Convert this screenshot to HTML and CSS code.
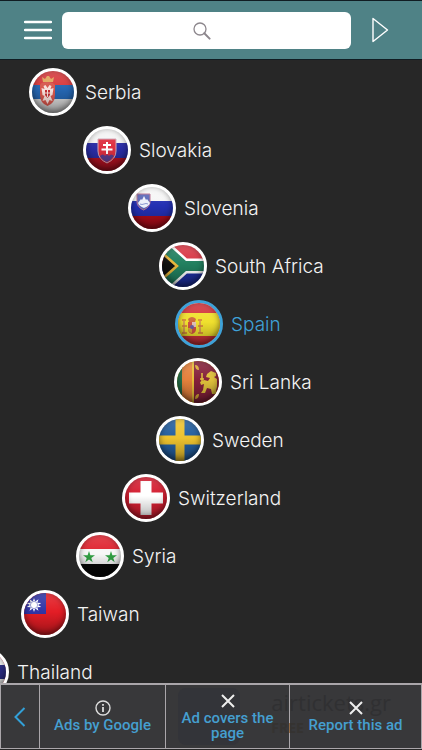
FILE: index.html
```html
<!DOCTYPE html>
<html lang="en">
<head>
<meta charset="UTF-8" />
<meta name="viewport" content="width=device-width, initial-scale=1" />
<title>Countries</title>
<link rel="stylesheet" href="styles.css">
</head>
<body>

<header class="topbar">
  <button class="icon-btn" aria-label="Menu">
    <svg width="28" height="20" viewBox="0 0 28 20"><path d="M1 2h26M1 10h26M1 18h26" stroke="#fff" stroke-width="2.300" stroke-linecap="round"/></svg>
  </button>
  <form class="search">
    <input type="search" aria-label="Search">
    <svg class="search-icon" width="18" height="18" viewBox="0 0 18 18" fill="none" stroke="#8d878d"><circle cx="7" cy="7" r="6" stroke-width="1.300"/><path d="M11.300 11.300L16.600 16.600" stroke-width="2" stroke-linecap="round"/></svg>
  </form>
  <button class="icon-btn" aria-label="Play">
    <svg width="18" height="26" viewBox="0 0 18 26"><path d="M2 1.500V24.500L16.500 13Z" fill="none" stroke="#fff" stroke-width="1.400" stroke-linejoin="round"/></svg>
  </button>
</header>

<main>
  <ul class="wheel">
    <li style="--shift: 29px"><a href="#serbia">
      <svg class="flag" viewBox="0 0 42 42">
        <rect width="42" height="14" fill="#d8393c"/><rect y="14" width="42" height="14" fill="#2565b0"/><rect y="28" width="42" height="14" fill="#d8d8d8"/>
        <path d="M8 14q1-3 7-3t8 3v10q0 8-7.500 11Q8 32 8 24z" fill="#d6564c"/>
        <path d="M11 11l-1-5 3 2 2-3 2 0 2 3 3-2-1 5z" fill="#dfa65a"/>
        <path d="M15.500 17l-2-3-2 1 1 3-3-1 1 7 2 1-2 5 3-1 2 4 2-4 3 1-2-5 2-1 1-7-3 1 1-3-2-1z" fill="#f6dfda"/>
        <path d="M13 19h5v5l-2.500 3-2.500-3z" fill="#c22f35"/><path d="M15.500 19v7M13 22h5" stroke="#f6dfda"/>
      </svg>Serbia</a></li>
    <li style="--shift: 83px"><a href="#slovakia">
      <svg class="flag" viewBox="0 0 42 42">
        <rect width="42" height="14" fill="#f4f4f4"/><rect y="14" width="42" height="15" fill="#2a2da5"/><rect y="29" width="42" height="13" fill="#b01222"/>
        <path d="M12 10h18v12q0 8-9 12Q12 30 12 22z" fill="#dd2f40" stroke="#cfa9b8"/>
        <path d="M14 27q3-3 5 0 2-3 4 0 2-3 5 0-3 4-7 6-5-2-7-6z" fill="#5a3c8e"/>
        <path d="M21 13v12M17 16h8M15.500 20.500h11" stroke="#fff" stroke-width="2"/>
      </svg>Slovakia</a></li>
    <li style="--shift: 128px"><a href="#slovenia">
      <svg class="flag" viewBox="0 0 42 42">
        <rect width="42" height="14" fill="#f6f6f6"/><rect y="14" width="42" height="15" fill="#2330b3"/><rect y="29" width="42" height="13" fill="#b30d1b"/>
        <path d="M6 7h13v8q0 5-6.500 8Q6 20 6 15z" fill="#5a68b8" stroke="#b9708f"/>
        <path d="M7 16l3-4 1 1 2-4 2 4 1-1 3 4q-1 3-6 5-5-2-6-5z" fill="#eef0fa"/>
        <path d="M9 17q2 1 4 0t4 0" fill="none" stroke="#8a95cf"/>
      </svg>Slovenia</a></li>
    <li style="--shift: 159px"><a href="#south-africa">
      <svg class="flag" viewBox="0 0 42 42">
        <rect width="42" height="21" fill="#d83744"/><rect y="21" width="42" height="21" fill="#1d2fa0"/>
        <path d="M0 1L22 21H42M0 41L22 21" fill="none" stroke="#fff" stroke-width="15"/>
        <path d="M0 1L22 21H42M0 41L22 21" fill="none" stroke="#22805f" stroke-width="10"/>
        <path d="M-2 6L15 21L-2 36z" fill="#111" stroke="#e7b63c" stroke-width="2.500"/>
      </svg>South Africa</a></li>
    <li class="selected" style="--shift: 175px"><a href="#spain" aria-current="true">
      <svg class="flag" viewBox="0 0 42 42">
        <rect width="42" height="42" fill="#d2343c"/><rect y="10" width="42" height="23" fill="#f0e02e"/>
        <path d="M6 18v12M22 18v12" stroke="#d8a050" stroke-width="2"/>
        <path d="M4 30h5M20 30h5M4 23h5M20 23h5M4 17h4M20 17h4" stroke="#cf7a3c" stroke-width="1.300"/>
        <path d="M10 16q4-4 8 0l-1 3h-6z" fill="#cf6a3c"/>
        <path d="M10 19h8v7q0 4-4 5-4-1-4-5z" fill="#cf5145"/>
        <path d="M14 19h4v5h-4z" fill="#e0c2b8"/><path d="M10 25h4v5q-4-1-4-4z" fill="#dba938"/>
        <circle cx="14" cy="24" r="2" fill="#6a5fa5"/>
      </svg>Spain</a></li>
    <li style="--shift: 174px"><a href="#sri-lanka">
      <svg class="flag" viewBox="0 0 42 42">
        <rect width="42" height="42" fill="#e5bd38"/><rect width="6" height="42" fill="#25704a"/><rect x="5" width="10" height="42" fill="#e4813c"/>
        <rect x="17" width="25" height="42" fill="#85203a"/>
        <path d="M18 4q4 0 4 5-4 0-4-5zM18 38q4 0 4-5-4 0-4 5z" fill="#d9a935"/>
        <path d="M30 13l4-3 5 2v3l-2 1 3 2v8l-1 3 1 4h-5l-1-5-4-1-2 5h-4l2-3 1-6-3 1-1-3 4-2 4 1 2-3-4-1z" fill="#dfc03b"/>
        <path d="M25 12v10M23 18h4" stroke="#dfc03b" stroke-width="1.500"/>
      </svg>Sri Lanka</a></li>
    <li style="--shift: 156px"><a href="#sweden">
      <svg class="flag" viewBox="0 0 42 42">
        <rect width="42" height="42" fill="#245f9f"/><path d="M21 0v42M0 21h42" stroke="#edc22e" stroke-width="9"/>
      </svg>Sweden</a></li>
    <li style="--shift: 122px"><a href="#switzerland">
      <svg class="flag" viewBox="0 0 42 42">
        <rect width="42" height="42" fill="#d51f32"/><path d="M21 4v34M4 21h34" stroke="#fff" stroke-width="11"/>
      </svg>Switzerland</a></li>
    <li style="--shift: 76px"><a href="#syria">
      <svg class="flag" viewBox="0 0 42 42">
        <rect width="42" height="14" fill="#df2531"/><rect y="14" width="42" height="15" fill="#f7f7f7"/><rect y="29" width="42" height="13" fill="#080808"/>
        <path id="star" d="M10 16l1.400 4.200h4.600l-3.700 2.700 1.400 4.400-3.700-2.700-3.700 2.700 1.400-4.400-3.700-2.700h4.600z" fill="#31a043"/>
        <use href="#star" x="22"/>
      </svg>Syria</a></li>
    <li style="--shift: 21px"><a href="#taiwan">
      <svg class="flag" viewBox="0 0 42 42">
        <rect width="42" height="42" fill="#e31d25"/><rect width="22" height="21" fill="#3034a6"/>
        <path d="M10 5l1.200 3.500 3.300-2.300-1.200 3.500 4 .3-3.200 2 3.200 2-4 .3 1.200 3.500-3.300-2.300L10 19l-1.200-3.500-3.300 2.300 1.200-3.500-4-.3 3.200-2-3.200-2 4-.3-1.200-3.500 3.300 2.300z" fill="#fff"/>
        <circle cx="10" cy="12" r="3.600" fill="#fff" stroke="#6d72c0" stroke-width=".7"/>
      </svg>Taiwan</a></li>
    <li style="--shift: -39px"><a href="#thailand">
      <svg class="flag" viewBox="0 0 42 42">
        <rect width="42" height="42" fill="#c8202f"/><rect y="7" width="42" height="28" fill="#eee"/><rect y="14" width="42" height="14" fill="#292a80"/>
      </svg>Thailand</a></li>
  </ul>
</main>

<footer class="adbar">
  <button aria-label="Back">
    <svg width="12" height="20" viewBox="0 0 12 20"><path d="M10.500 1L1.500 10L10.500 19" fill="none" stroke="#32a0d8" stroke-width="2"/></svg>
  </button>
  <button>
    <svg width="16" height="16" viewBox="0 0 16 16"><circle cx="8" cy="8" r="7" fill="none" stroke="#ddd" stroke-width="1.400"/><path d="M8 7v5M8 4v1.700" stroke="#ddd" stroke-width="1.800"/></svg>
    <span>Ads by Google</span>
  </button>
  <button class="ad-logo">
    <svg width="16" height="16" viewBox="0 0 16 16"><path d="M2 2l12 12M14 2L2 14" stroke="#eee" stroke-width="2"/></svg>
    <span>Ad covers the page</span>
  </button>
  <button>
    <svg width="16" height="16" viewBox="0 0 16 16"><path d="M2 2l12 12M14 2L2 14" stroke="#eee" stroke-width="2"/></svg>
    <span>Report this ad</span>
  </button>
  <div class="ad-ghost" aria-hidden="true">
    <span class="ghost-name">airtickets.gr</span>
    <span class="ghost-tag">FREE</span>
  </div>
</footer>

</body>
</html>
```
FILE: styles.css
```css
* { box-sizing: border-box; }
body {
  margin: 0;
  height: 100vh;
  display: flex;
  flex-direction: column;
  overflow: hidden;
  background: #272727;
  color: #f4f4f4;
  font-family: Inter, "Liberation Sans", sans-serif;
}

button {
  padding: 0;
  border: 0;
  background: none;
  font: inherit;
  color: inherit;
  cursor: pointer;
}

svg { display: block; }

.topbar {
  display: flex;
  flex: none;
  align-items: center;
  height: 60px;
  padding: 0 33px 0 24px;
  background: #4f8286;
  border-top: 1px solid #101c22;
  border-bottom: 1px solid #101c22;
}

.search {
  position: relative;
  flex: 1;
  margin: 0 20px 0 10px;
}

.search input {
  display: block;
  width: 100%;
  height: 37px;
  padding: 0 12px;
  border: 0;
  border-radius: 6px;
  background: #fff;
  font: inherit;
}

.search-icon {
  position: absolute;
  top: 10px;
  left: calc(50% - 14px);
  pointer-events: none;
}

main {
  flex: 1;
  min-height: 0;
  overflow: hidden;
}

.wheel {
  display: flex;
  flex-direction: column;
  gap: 10px;
  margin: 0;
  padding: 8px 0 0;
  list-style: none;
}

/* each row is shifted along the curve of the wheel */
.wheel li { margin-left: var(--shift); }

.wheel a {
  position: relative;
  display: flex;
  align-items: center;
  gap: 8px;
  color: inherit;
  font-size: 19px;
  font-weight: 300;
  text-decoration: none;
}

.flag {
  width: 48px;
  height: 48px;
  border: 3px solid #fff;
  border-radius: 50%;
  background: #fff;
}

/* glossy ball shading */
.wheel a::before {
  content: "";
  position: absolute;
  left: 3px;
  width: 42px;
  height: 42px;
  border-radius: 50%;
  background: linear-gradient(rgba(255,255,255,.15), rgba(255,255,255,0) 45%, rgba(0,0,0,.3));
  box-shadow: inset 0 -2px 6px rgba(0,0,0,.5);
}

.selected { color: #3fa2d8; }
.selected .flag { border-color: #3fa2d8; }

.adbar {
  position: relative;
  display: grid;
  grid-template-columns: 38fr 125fr 123fr 131fr;
  flex: none;
  gap: 1px;
  height: 66px;
  margin-bottom: 1px;
  padding: 2px 1px 1px;
  background: #aaa6aa;
  color: #459fd0;
  font: 500 15px/15px Roboto, sans-serif;
}

.adbar button {
  position: relative;
  display: flex;
  flex-direction: column;
  align-items: center;
  justify-content: center;
  gap: 2px;
  padding: 0 8px;
  background: #38383a;
}

.adbar button svg,
.adbar button span {
  position: relative;
  z-index: 2;
}

/* the dimmed advert shows through the buttons */
.ad-logo::before {
  content: "";
  position: absolute;
  top: 3px;
  bottom: 3px;
  left: 12px;
  width: 62px;
  border-radius: 8px;
  background: #333439;
}

.ad-ghost {
  position: absolute;
  z-index: 1;
  top: 6px;
  right: 31px;
  color: #303032;
  font: 22px/26px "Open Sans", sans-serif;
  pointer-events: none;
}

.ghost-name, .ghost-tag { display: block; }
.ghost-tag { font-size: 14px; font-weight: bold; color: #353331; }
```
